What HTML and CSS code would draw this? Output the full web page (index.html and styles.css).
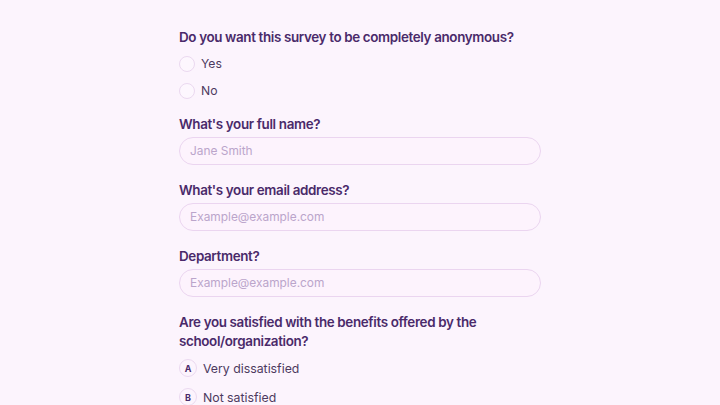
FILE: index.html
```html
<!DOCTYPE html>
<html lang="en">
<head>
<meta charset="utf-8">
<link rel="stylesheet" href="styles.css">
</head>
<body>
<main class="form">
  <section class="field">
    <h2 class="q">Do you want this survey to be completely anonymous?</h2>
    <div class="radios">
      <label class="radio"><span class="dot"></span>Yes</label>
      <label class="radio"><span class="dot"></span>No</label>
    </div>
  </section>
  <section class="field">
    <h2 class="q">What's your full name?</h2>
    <div class="input">Jane Smith</div>
  </section>
  <section class="field">
    <h2 class="q">What's your email address?</h2>
    <div class="input">Example@example.com</div>
  </section>
  <section class="field">
    <h2 class="q">Department?</h2>
    <div class="input">Example@example.com</div>
  </section>
  <section class="field">
    <h2 class="q">Are you satisfied with the benefits offered by the school/organization?</h2>
    <div class="choices">
      <div class="choice"><span class="key">A</span>Very dissatisfied</div>
      <div class="choice"><span class="key">B</span>Not satisfied</div>
    </div>
  </section>
</main>
</body>
</html>
```
FILE: styles.css
```css
html, body {
  margin: 0;
  padding: 0;
  background: #fcf4fd;
  height: 100%;
  overflow: hidden;
}
body {
  font-family: Inter, "Noto Sans", sans-serif;
  color: #4d3a5f;
}
.form {
  width: 362px;
  margin-left: 179px;
  padding-top: 28px;
  display: flex;
  flex-direction: column;
  gap: 16px;
}
.q {
  margin: 0;
  font-size: 13.4px;
  font-weight: 600;
  line-height: 19px;
  color: #4a2a6a;
  letter-spacing: -0.35px;
}
.radios {
  display: flex;
  flex-direction: column;
  gap: 8px;
  margin-top: 7px;
  margin-bottom: -1.5px;
}
.radio {
  display: flex;
  align-items: center;
  gap: 6px;
  font-size: 12.2px;
  height: 19px;
}
.dot {
  width: 14px;
  height: 14px;
  border: 1px solid #ebd9f0;
  border-radius: 50%;
  background: #fdf7fe;
}
.input {
  margin-top: 3px;
  height: 26px;
  border: 1px solid #ebd5f0;
  border-radius: 14px;
  background: #fdf3fd;
  padding-left: 10px;
  display: flex;
  align-items: center;
  font-size: 11.9px;
  color: #bba5cb;
}
.choices {
  display: flex;
  flex-direction: column;
  gap: 10px;
  margin-top: 8px;
}
.choice {
  display: flex;
  align-items: center;
  gap: 6px;
  font-size: 12.3px;
  height: 19px;
}
.key {
  width: 16px;
  height: 16px;
  border: 1px solid #ebd9f0;
  border-radius: 50%;
  display: flex;
  align-items: center;
  justify-content: center;
  font-size: 9px;
  font-weight: 700;
  color: #4a2a6a;
}
```
